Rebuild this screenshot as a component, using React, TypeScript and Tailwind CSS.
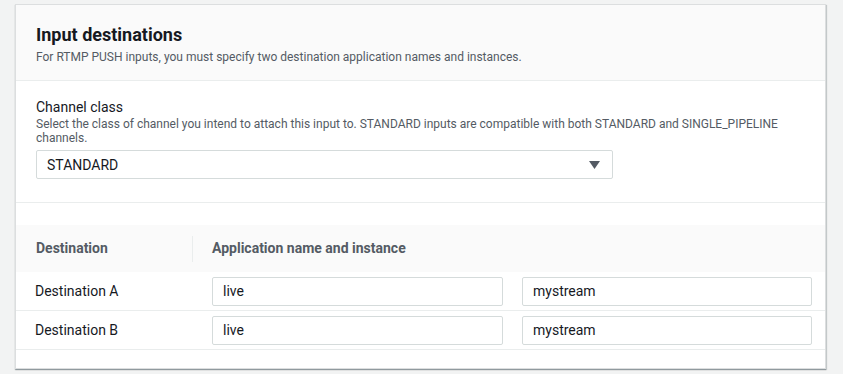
export default function App() {
  const rows = [
    { name: "Destination A", app: "live", instance: "mystream" },
    { name: "Destination B", app: "live", instance: "mystream" },
  ];

  return (
    <div className="w-[843px] h-[374px] bg-[#f2f3f3] pt-[4px] pl-[15px] font-['Roboto',sans-serif] text-[#16191f]">
      <div className="w-[811px] h-[365px] bg-white border border-[#dcdedf] shadow-[0_1px_1px_0_rgba(0,28,36,0.3),1px_1px_1px_0_rgba(0,28,36,0.15)]">
        {/* header */}
        <div className="h-[76px] bg-[#fafafa] border-b border-[#eaeded] px-[20px] pt-[18px]">
          <h2 className="text-[18px] leading-[24px] font-bold">Input destinations</h2>
          <p className="text-[12px] leading-[18px] text-[#545b64] mt-[1px]">
            For RTMP PUSH inputs, you must specify two destination application names and instances.
          </p>
        </div>

        {/* channel class */}
        <div className="h-[122px] border-b border-[#eaeded] px-[20px] pt-[16px]">
          <div className="text-[14px] leading-[20px]">Channel class</div>
          <div className="text-[12px] leading-[14px] text-[#545b64] w-[760px]">
            Select the class of channel you intend to attach this input to. STANDARD inputs are compatible with both STANDARD and SINGLE_PIPELINE channels.
          </div>
          <div className="mt-[5px] w-[577px] h-[29px] border border-[#d5dbdb] rounded-[2px] flex items-center justify-between pl-[10px] pr-[12px]">
            <span className="text-[14px] pt-[2px]">STANDARD</span>
            <svg width="11" height="8" viewBox="0 0 11 8">
              <path d="M0 0 L11 0 L5.5 8 Z" fill="#545b64" />
            </svg>
          </div>
        </div>

        {/* table */}
        <div className="pt-[22px]">
          <div className="h-[47px] bg-[#fafafa] flex items-center text-[14px] font-bold text-[#545b64]">
            <div className="w-[177px] pl-[20px] h-[26px] flex items-center border-r border-[#eaeded]">Destination</div>
            <div className="pl-[19px]">Application name and instance</div>
          </div>
          {rows.map((r, i) => (
            <div key={i} className="h-[39px] flex items-center border-b border-[#eaeded] text-[14px]">
              <div className="w-[196px] pl-[19px]">{r.name}</div>
              <div className="w-[291px] h-[29px] border border-[#d5dbdb] rounded-[2px] flex items-center pl-[10px]">{r.app}</div>
              <div className="ml-[19px] w-[290px] h-[29px] border border-[#d5dbdb] rounded-[2px] flex items-center pl-[10px]">{r.instance}</div>
            </div>
          ))}
        </div>
      </div>
    </div>
  );
}
